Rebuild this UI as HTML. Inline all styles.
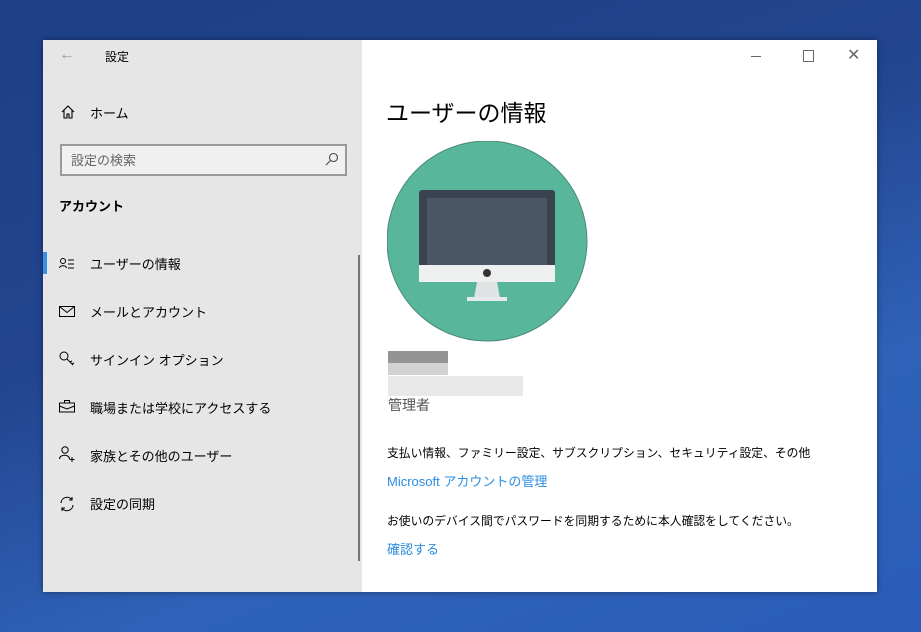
<!DOCTYPE html>
<html><head><meta charset="utf-8"><style>
body{margin:0;width:921px;height:632px;overflow:hidden;position:relative;font-family:"Liberation Sans","Noto Sans CJK JP",sans-serif;
background:linear-gradient(160deg,#1d3f86 0%,#22458f 40%,#2f62b8 70%,#2a5cb8 100%);}
.win{position:absolute;left:43px;top:40px;width:834px;height:552px;background:#fff;box-shadow:0 0 6px rgba(0,0,0,.4);}
.side{position:absolute;left:0;top:0;width:319px;height:552px;background:#e6e6e6;}
.t{position:absolute;white-space:nowrap;color:#000;font-size:13px;}
.ic{position:absolute;}
</style></head><body>
<div class="win">
<div class="side">
<div class="t" style="left:16px;top:6px;color:#999;font-size:16px">←</div>
<div class="t" style="left:62px;top:8px;font-size:12px">設定</div>
<svg class="ic" style="left:17px;top:64px" width="16" height="16" viewBox="0 0 16 16" fill="none" stroke="#000" stroke-width="1.1"><path d="M2 8L8 2l6 6M4 6v8h3v-4h2v4h3V6"/></svg>
<div class="t" style="left:47px;top:63px">ホーム</div>
<div style="position:absolute;left:17px;top:104px;width:287px;height:32px;border:2px solid #999;background:#f0f0f0;box-sizing:border-box"></div>
<div class="t" style="left:28px;top:110px;color:#666">設定の検索</div>
<svg class="ic" style="left:282px;top:112px" width="14" height="14" viewBox="0 0 14 14" fill="none" stroke="#444" stroke-width="1.1"><circle cx="8.5" cy="5.5" r="4"/><path d="M5.5 8.5L1 13"/></svg>
<div class="t" style="left:16px;top:156px;font-weight:bold">アカウント</div>
<div style="position:absolute;left:0;top:212px;width:4px;height:22px;background:#3a8ee6"></div>
<div style="position:absolute;left:315px;top:215px;width:2px;height:306px;background:#777"></div>
<svg class="ic" style="left:16px;top:217px" width="16" height="14" viewBox="0 0 16 14" fill="none" stroke="#000" stroke-width="1"><circle cx="4" cy="4" r="2.5"/><path d="M0.5 11c0-3 7-3 7 0M9 3h6M9 7h6M9 11h6"/></svg>
<div class="t" style="left:47px;top:214px">ユーザーの情報</div>
<svg class="ic" style="left:16px;top:266px" width="16" height="12" viewBox="0 0 16 12" fill="none" stroke="#000" stroke-width="1"><rect x="0.5" y="0.5" width="15" height="10"/><path d="M0.5 0.5l7.5 6 7.5-6"/></svg>
<div class="t" style="left:47px;top:262px">メールとアカウント</div>
<svg class="ic" style="left:16px;top:311px" width="17" height="17" viewBox="0 0 17 17" fill="none" stroke="#000" stroke-width="1"><circle cx="5" cy="5" r="4"/><path d="M8 8l6 6M11 11l2-1M13 13l2-1"/></svg>
<div class="t" style="left:47px;top:310px">サインイン オプション</div>
<svg class="ic" style="left:16px;top:360px" width="16" height="13" viewBox="0 0 16 13" fill="none" stroke="#000" stroke-width="1"><rect x="0.5" y="3" width="15" height="9"/><path d="M5.5 3V0.5h5V3M0.5 6l7.5 3 7.5-3"/></svg>
<div class="t" style="left:47px;top:358px">職場または学校にアクセスする</div>
<svg class="ic" style="left:16px;top:406px" width="17" height="17" viewBox="0 0 17 17" fill="none" stroke="#000" stroke-width="1"><circle cx="6" cy="4" r="3.2"/><path d="M0.5 13c0-5 10-5 10 0M13 11v5M10.5 13.5h5"/></svg>
<div class="t" style="left:47px;top:406px">家族とその他のユーザー</div>
<svg class="ic" style="left:16px;top:456px" width="16" height="16" viewBox="0 0 16 16" fill="none" stroke="#000" stroke-width="1.1"><path d="M2 7a6 6 0 0 1 11-3M14 9a6 6 0 0 1-11 3M13 1v3h-3M3 15v-3h3"/></svg>
<div class="t" style="left:47px;top:454px">設定の同期</div>
</div>
<div style="position:absolute;left:708px;top:16px;width:10px;height:1px;background:#666"></div>
<div style="position:absolute;left:760px;top:10px;width:9px;height:10px;border:1px solid #666"></div>
<div class="t" style="left:804px;top:5px;color:#666;font-size:16px">✕</div>
<div class="t" style="left:343px;top:54px;font-size:23px">ユーザーの情報</div>
<svg class="ic" style="left:344px;top:101px" width="202" height="202" viewBox="0 0 202 202"><circle cx="100" cy="100" r="100" fill="#58b79b" stroke="#4a8a78" stroke-width="1"/><rect x="32" y="49" width="136" height="92" rx="3" fill="#3a4450"/><rect x="40" y="57" width="120" height="67" fill="#4a5665"/><rect x="32" y="124" width="136" height="17" fill="#eef0f0"/><circle cx="100" cy="132" r="4" fill="#333"/><path d="M90 141h20l3 16H87z" fill="#e0e3e3"/><rect x="80" y="156" width="40" height="4" fill="#e7eaea"/></svg>
<div style="position:absolute;left:345px;top:311px;width:60px;height:12px;background:#949494"></div>
<div style="position:absolute;left:345px;top:323px;width:60px;height:12px;background:#d2d2d2"></div>
<div style="position:absolute;left:345px;top:336px;width:135px;height:20px;background:#e8e8e8"></div>
<div class="t" style="left:345px;top:355px;color:#555;font-size:14px">管理者</div>
<div class="t" style="left:344px;top:404px;font-size:11.8px">支払い情報、ファミリー設定、サブスクリプション、セキュリティ設定、その他</div>
<div class="t" style="left:344px;top:431px;color:#2a8ce0">Microsoft アカウントの管理</div>
<div class="t" style="left:344px;top:472px;font-size:11.8px">お使いのデバイス間でパスワードを同期するために本人確認をしてください。</div>
<div class="t" style="left:344px;top:499px;color:#2a8ce0">確認する</div>
</div>
</body></html>
